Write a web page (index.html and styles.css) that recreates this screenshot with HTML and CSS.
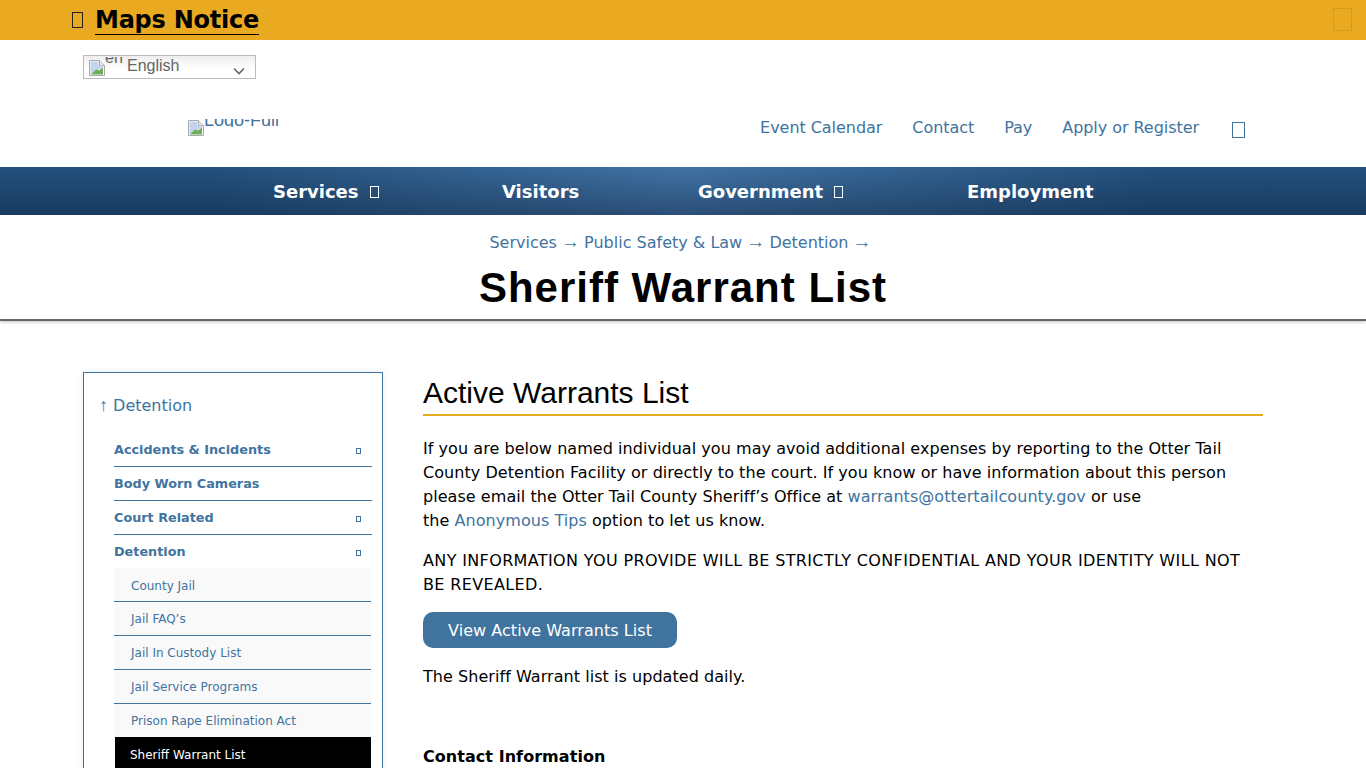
FILE: index.html
```html
<!DOCTYPE html>
<html lang="en">

<head>
    <meta charset="UTF-8">
    <meta name="viewport" content="width=device-width, initial-scale=1.0">
    <title>Sheriff Warrant List</title>
    <link rel="stylesheet" href="styles.css">
</head>

<body>

    <div class="notice-bar">
        <div class="notice-left">
            <span class="tofu tofu-notice"></span>
            <a class="notice-link" href="#">Maps Notice</a>
        </div>
        <span class="notice-close"></span>
    </div>

    <div class="lang-row">
        <div class="lang-select">
            <svg class="broken-img" width="16" height="16" viewBox="0 0 16 16">
                <path d="M.5.5h10l5 5v10H.5z" fill="#fff" stroke="#a9a9a9" />
                <path d="M10.5.5v5h5" fill="#e8e8e8" stroke="#a9a9a9" />
                <path d="M1.5 1.5h8v4h5v2L9 10l-3 3-4.500 1.500z" fill="#c4d4ee" />
                <path d="M2 14.500l5-5 3 1 4-3v7z" fill="#6cae5a" />
            </svg>
            <span class="lang-alt">en</span>
            <span class="lang-name">English</span>
            <svg class="lang-arrow" width="12" height="8" viewBox="0 0 12 8">
                <path d="M1 1.500l5 5 5-5" fill="none" stroke="#666" stroke-width="1.600" />
            </svg>
        </div>
    </div>

    <header class="site-header">
        <div class="logo">
            <svg class="broken-img" width="16" height="16" viewBox="0 0 16 16">
                <path d="M.5.5h10l5 5v10H.5z" fill="#fff" stroke="#a9a9a9" />
                <path d="M10.5.5v5h5" fill="#e8e8e8" stroke="#a9a9a9" />
                <path d="M1.5 1.500h8v4h5v2L9 10l-3 3-4.500 1.500z" fill="#c4d4ee" />
                <path d="M2 14.500l5-5 3 1 4-3v7z" fill="#6cae5a" />
            </svg>
            <span class="logo-alt">Logo-Full</span>
        </div>
        <nav class="top-links">
            <a href="#">Event Calendar</a>
            <a href="#">Contact</a>
            <a href="#">Pay</a>
            <a href="#">Apply or Register</a>
            <span class="tofu tofu-search"></span>
        </nav>
    </header>

    <nav class="main-nav">
        <a class="nav-services" href="#">Services <span class="tofu tofu-nav"></span></a>
        <a class="nav-visitors" href="#">Visitors</a>
        <a class="nav-government" href="#">Government <span class="tofu tofu-nav"></span></a>
        <a class="nav-employment" href="#">Employment</a>
    </nav>

    <div class="page-title">
        <div class="breadcrumb">
            <a href="#">Services</a> <span class="sep">→</span>
            <a href="#">Public Safety &amp; Law</a> <span class="sep">→</span>
            <a href="#">Detention</a> <span class="sep">→</span>
        </div>
        <h1>Sheriff Warrant List</h1>
    </div>

    <div class="content">
        <aside class="sidebar">
            <a class="side-up" href="#"><span class="up-arrow">↑</span> Detention</a>
            <ul class="side-menu">
                <li><a href="#">Accidents &amp; Incidents</a><span class="tofu tofu-small"></span></li>
                <li><a href="#">Body Worn Cameras</a></li>
                <li><a href="#">Court Related</a><span class="tofu tofu-small"></span></li>
                <li class="open"><a href="#">Detention</a><span class="tofu tofu-small"></span></li>
            </ul>
            <ul class="side-sub">
                <li><a href="#">County Jail</a></li>
                <li><a href="#">Jail FAQ’s</a></li>
                <li><a href="#">Jail In Custody List</a></li>
                <li><a href="#">Jail Service Programs</a></li>
                <li><a href="#">Prison Rape Elimination Act</a></li>
                <li class="current"><a href="#">Sheriff Warrant List</a></li>
            </ul>
        </aside>

        <main class="main-col">
            <h2>Active Warrants List</h2>
            <p>If you are below named individual you may avoid additional expenses by reporting to the Otter Tail
                County Detention Facility or directly to the court. If you know or have information about this person
                please email the Otter Tail County Sheriff’s Office at <a href="#">warrants@ottertailcounty.gov</a> or use<br>
                the <a href="#">Anonymous Tips</a> option to let us know.</p>
            <p class="caps">ANY INFORMATION YOU PROVIDE WILL BE STRICTLY CONFIDENTIAL AND YOUR IDENTITY WILL NOT BE REVEALED.</p>
            <a class="btn" href="#">View Active Warrants List</a>
            <p>The Sheriff Warrant list is updated daily.</p>
            <h3>Contact Information</h3>
        </main>
    </div>

</body>

</html>
```

FILE: styles.css
```css
html,
body {
    height: 768px;
    overflow: hidden;
}

body {
    margin: 0;
    font-family: "DejaVu Sans", Verdana, sans-serif;
    font-size: 16px;
    line-height: 24px;
    color: #000;
    background-color: #fff;
}

a {
    color: #41739f;
    text-decoration: none;
}

/* missing glyph boxes */
.tofu {
    display: inline-block;
    box-sizing: border-box;
    border: 1px solid currentColor;
}

.notice-bar {
    height: 40px;
    background-color: #e9aa22;
    display: flex;
    align-items: center;
    justify-content: space-between;
    padding: 0 14px 0 72px;
}

.notice-left {
    display: flex;
    align-items: center;
}

.tofu-notice {
    width: 11px;
    height: 16px;
    color: #222;
    margin-right: 12px;
}

.notice-link {
    color: #000;
    font-size: 24px;
    font-weight: bold;
    line-height: 28px;
    letter-spacing: -0.25px;
    border-bottom: 1px solid #000;
    margin-top: 1px;
}

.notice-close {
    width: 19px;
    height: 23px;
    box-sizing: border-box;
    border: 1px solid #d49a20;
    margin-bottom: 1px;
}

.lang-row {
    padding: 15px 0 0 83px;
}

.lang-select {
    box-sizing: border-box;
    width: 173px;
    height: 24px;
    border: 1px solid #bbb;
    background: linear-gradient(#eee, #fff 60%);
    display: flex;
    align-items: center;
    padding-left: 5px;
    position: relative;
    font-family: "Liberation Sans", Arial, sans-serif;
    color: #666;
}

.lang-select .broken-img {
    margin-top: 1px;
}

/* the alt text of a broken image, cut off at the top */
.lang-alt {
    font-size: 16px;
    line-height: 1px;
    height: 7px;
    overflow: hidden;
    align-self: flex-start;
    margin-top: 1px;
    width: 18px;
}

.lang-name {
    margin-top: -2px;
    margin-left: 4px;
}

.lang-arrow {
    position: absolute;
    right: 10px;
    top: 11px;
}

.site-header {
    height: 88px;
    position: relative;
    display: flex;
    justify-content: flex-end;
    align-items: center;
    padding-right: 121px;
}

.logo {
    position: absolute;
    left: 188px;
    top: 41px;
    display: flex;
    font-family: "Liberation Sans", Arial, sans-serif;
    color: #41739f;
    font-size: 18px;
}

.logo-alt {
    height: 8px;
    overflow: hidden;
    line-height: 3px;
    margin-top: -1px;
}

.top-links {
    display: flex;
    align-items: center;
    height: 88px;
}

.top-links a {
    margin-right: 30px;
    font-size: 16px;
    position: relative;
    top: 5px;
    letter-spacing: -0.05px;
}

.top-links a:nth-child(4) {
    margin-right: 33px;
}

.tofu-search {
    width: 13px;
    height: 16px;
    color: #41739f;
    position: relative;
    top: 7px;
}

.main-nav {
    height: 48px;
    background:
        linear-gradient(rgba(10, 25, 50, 0), rgba(10, 25, 50, 0.4)),
        linear-gradient(90deg, #23507c 15%, #4173a5 50%, #23507c 85%);
    position: relative;
    display: flex;
    align-items: center;
    font-size: 18px;
    font-weight: bold;
}

.main-nav a {
    color: #fff;
    position: absolute;
    white-space: nowrap;
    margin-top: 1px;
}

.nav-services {
    left: 273px;
}

.nav-visitors {
    left: 502px;
}

.nav-government {
    left: 698px;
}

.nav-employment {
    left: 967px;
}

.tofu-nav {
    width: 9px;
    height: 12px;
    margin-left: 5px;
}

.page-title {
    height: 106px;
    box-sizing: border-box;
    border-bottom: 2px solid #666;
    box-shadow: 0 1px 3px rgba(0, 0, 0, 0.25);
    text-align: center;
    padding-top: 16px;
}

.breadcrumb {
    line-height: 24px;
    font-size: 16px;
    padding-right: 6px;
}

.sep {
    color: #41739f;
    font-family: "Liberation Sans", Arial, sans-serif;
    font-size: 19px;
    line-height: 16px;
    margin: 0 -1px;
}

h1 {
    margin: 9px 0 0;
    font-family: "Liberation Sans", Arial, sans-serif;
    font-size: 42px;
    line-height: 48px;
    letter-spacing: 1px;
}

.content {
    display: flex;
    padding: 51px 103px 0 83px;
    gap: 40px;
}

.sidebar {
    width: 300px;
    box-sizing: border-box;
    height: 500px;
    flex-shrink: 0;
    border: 1px solid #41739f;
    padding: 21px 10px 0 30px;
    box-shadow: 0 0 6px rgba(65, 115, 159, 0.15);
}

.side-up {
    display: block;
    font-size: 16px;
    line-height: 24px;
    margin-left: -15px;
}

.up-arrow {
    font-family: "Liberation Sans", Arial, sans-serif;
    font-size: 18px;
    line-height: 16px;
}

.side-menu,
.side-sub {
    list-style: none;
    margin: 0;
    padding: 0;
}

.side-menu {
    margin-top: 15px;
}

.side-menu li {
    height: 34px;
    box-sizing: border-box;
    border-bottom: 1px solid #41739f;
    display: flex;
    justify-content: space-between;
    align-items: center;
    font-size: 12.800px;
    font-weight: bold;
}

.side-menu li.open {
    height: 33px;
    border-bottom: 0;
}

.tofu-small {
    width: 5px;
    height: 6px;
    color: #41739f;
    margin: 3px 11px 0 0;
}

.side-sub li {
    height: 34px;
    box-sizing: border-box;
    background-color: #f9f9f9;
    border-bottom: 1px solid #41739f;
    margin-right: 1px;
    padding-left: 17px;
    font-size: 12px;
    line-height: 35px;
}

.side-sub li:first-child {
    line-height: 36px;
}

.side-sub li:nth-child(5) {
    height: 33px;
    border-bottom: 0;
}

.side-sub li.current {
    background-color: #000;
    border-bottom: 0;
    margin-left: 1px;
    padding-left: 15px;
    line-height: 37px;
}

.side-sub li.current a {
    color: #fff;
}

.main-col {
    width: 840px;
    letter-spacing: 0.05px;
}

h2 {
    margin: 0 0 21px;
    font-family: "Liberation Sans", Arial, sans-serif;
    font-size: 30px;
    font-weight: normal;
    line-height: 42px;
    letter-spacing: 0;
    border-bottom: 2px solid #e9aa22;
}

p {
    margin: 0 0 16px;
}

.caps {
    letter-spacing: 0.36px;
}

.btn {
    display: block;
    width: fit-content;
    background-color: #41739f;
    color: #fff;
    border-radius: 10px;
    height: 36px;
    line-height: 37px;
    padding: 0 25px;
    margin: -1px 0 17px;
}

h3 {
    margin: 56px 0 0;
    font-size: 16px;
    line-height: 24px;
}
```
